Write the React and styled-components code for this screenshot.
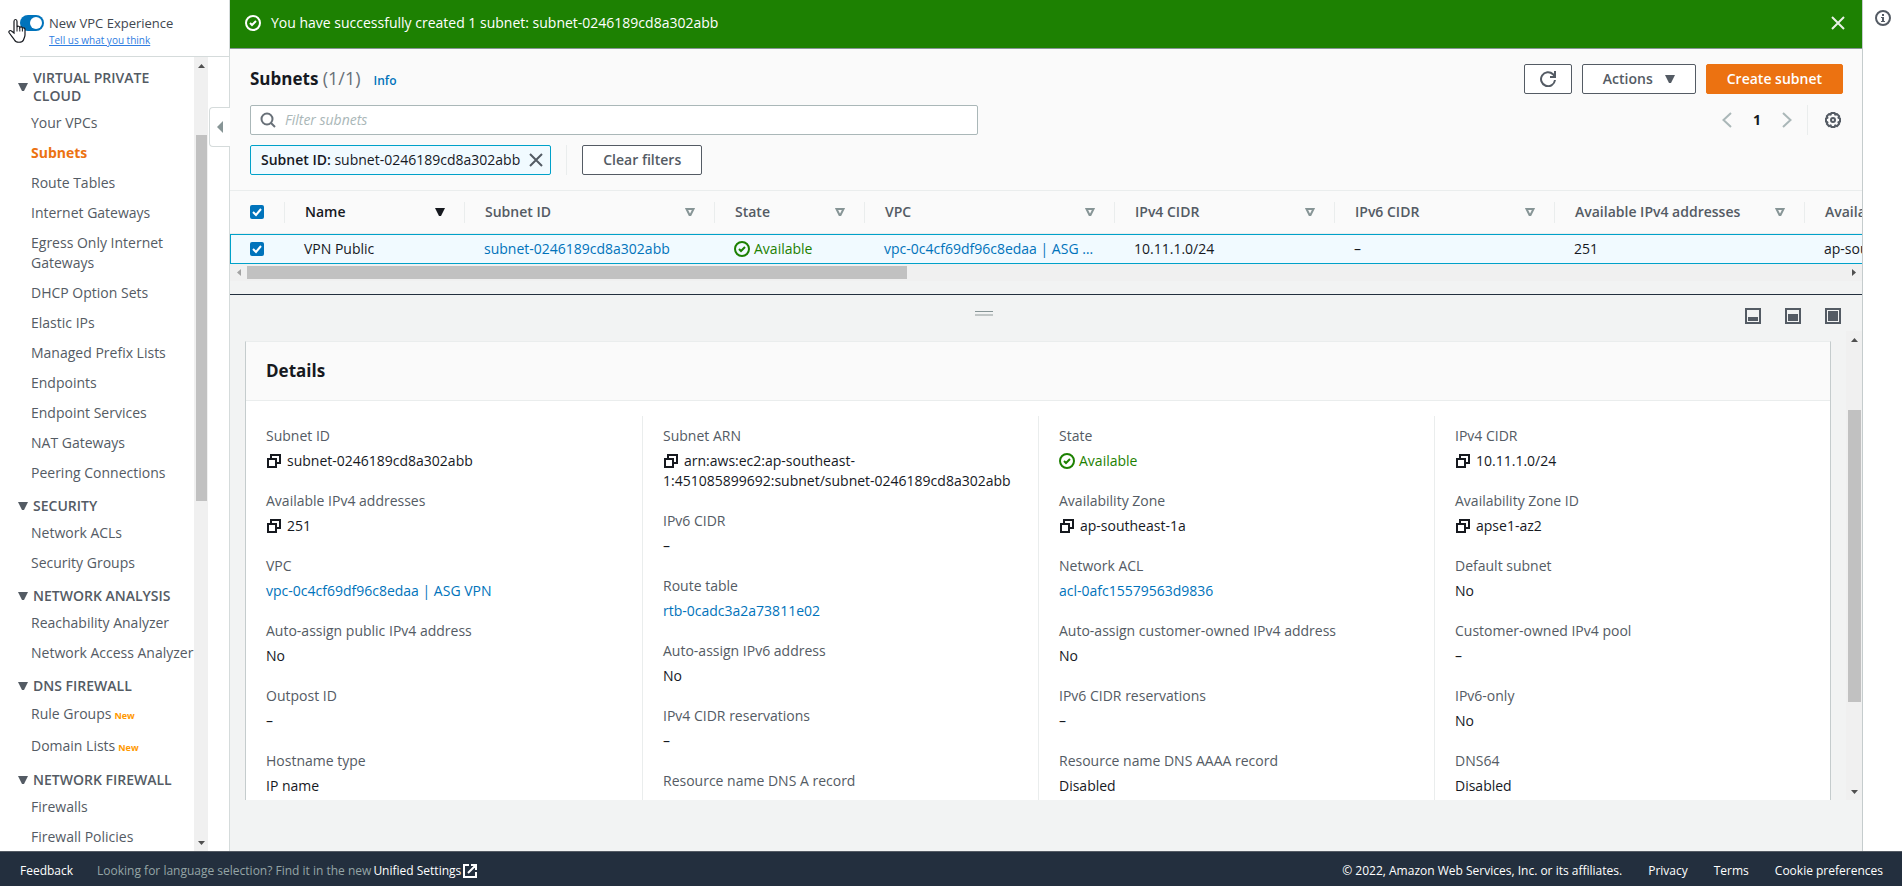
import React, { useState } from 'react';
import styled, { createGlobalStyle, css } from 'styled-components';

const GlobalStyle = createGlobalStyle`
    *, *::before, *::after { box-sizing: border-box; }
    body {
        margin: 0;
        background: #ffffff;
        color: #16191f;
        font-family: "Open Sans", "Noto Sans", sans-serif;
        font-size: 14px;
        line-height: 20px;
    }
    button, input { font: inherit; color: inherit; }
    a { color: #0073bb; text-decoration: none; }
    a:hover { text-decoration: underline; }
    ul, dl, dd, h1, h2, h3, p { margin: 0; padding: 0; }
    ul { list-style: none; }
    svg { display: block; flex: none; }
`

const Page = styled.div`
    display: flex;
    flex-direction: column;
    height: 100vh;
`

const Body = styled.div`
    display: flex;
    flex: 1;
    min-height: 0;
`

/* ---------- sidebar ---------- */

const Sidebar = styled.aside`
    position: relative;
    display: flex;
    flex-direction: column;
    width: 230px;
    flex: none;
    border-right: 1px solid #d5dbdb;
`

const Experience = styled.div`
    display: grid;
    grid-template-columns: 24px 1fr;
    column-gap: 5px;
    height: 57px;
    margin-left: 20px;
    padding-top: 13px;
    border-bottom: 1px solid #d5dbdb;
    align-content: start;
    align-items: center;
    color: #414750;
    font-size: 13px;
`

const Toggle = styled.input`
    appearance: none;
    width: 24px;
    height: 16px;
    margin: 0;
    padding: 2px;
    border-radius: 8px;
    background: #0073bb;
    &::before {
        content: '';
        display: block;
        width: 12px;
        height: 12px;
        margin-left: auto;
        border-radius: 50%;
        background: #ffffff;
    }
`

const FeedbackLink = styled.a`
    grid-column: 2;
    font-size: 10px;
    line-height: 14px;
    color: #2f7de1;
    text-decoration: underline;
`

const Pointer = styled.svg`
    position: absolute;
    left: 8px;
    top: 18px;
`

const SidebarScroll = styled.div`
    display: flex;
    flex: 1;
    min-height: 0;
    padding-right: 21px;
`

const Nav = styled.nav`
    flex: 1;
    overflow: hidden;
    padding: 3px 0 0 18px;
`

const GroupTitle = styled.h3`
    display: flex;
    align-items: center;
    gap: 5px;
    padding: 9px 40px 3px 0;
    font-size: 14px;
    line-height: 18px;
    font-weight: 600;
    color: #545b64;
    ${props => props.$wide && css`padding-right: 0; white-space: nowrap;`}
`

const NavItem = styled.li`
    padding: ${props => props.$tall ? '6px' : '5px'} 0 ${props => props.$tall ? '6px' : '5px'} 13px;
`

const NavLink = styled.a`
    color: ${props => props.$current ? '#ec7211' : '#545b64'};
    font-weight: ${props => props.$current ? 700 : 400};
`

const NewBadge = styled.span`
    margin-left: 3px;
    font-size: 9px;
    line-height: 1;
    font-weight: 700;
    color: #ff9900;
`

const CollapseButton = styled.button`
    position: absolute;
    right: -1px;
    top: 107px;
    display: flex;
    align-items: center;
    justify-content: center;
    width: 21px;
    height: 40px;
    padding: 0;
    border: 1px solid #d5dbdb;
    border-right: 0;
    border-radius: 4px 0 0 4px;
    background: #ffffff;
`

/* ---------- scroll bars ---------- */

const Track = styled.div`
    display: flex;
    flex: none;
    background: #f0f0f0;
    ${props => props.$horizontal
        ? css`height: 17px;`
        : css`flex-direction: column; width: ${props.$width};`}
`

const ArrowBox = styled.div`
    display: flex;
    align-items: center;
    justify-content: center;
    width: ${props => props.$horizontal ? '17px' : 'auto'};
    height: 17px;
    flex: none;
`

const Run = styled.div`
    flex: ${props => props.$size} 1 0;
`

const Thumb = styled(Run)`
    background: #c1c1c1;
    margin: ${props => props.$horizontal ? '2px 0' : '0 1px 0 2px'};
`

/* ---------- main column ---------- */

const Main = styled.main`
    display: flex;
    flex-direction: column;
    flex: 1;
    min-width: 0;
    border-right: 1px solid #c5cccd;
    background: #f2f3f3;
`

const Flash = styled.div`
    display: flex;
    align-items: center;
    gap: 10px;
    height: 49px;
    flex: none;
    padding: 0 16px 2px 15px;
    border-bottom: 1px solid #879596;
    background: #1d8102;
    color: #ffffff;
    font-weight: 500;
`

const FlashText = styled.p`
    flex: 1;
`

const IconButton = styled.button`
    display: flex;
    padding: 0;
    border: 0;
    background: none;
    color: ${props => props.$tone || '#545b64'};
`

const ListHeader = styled.div`
    display: flex;
    flex-direction: column;
    gap: 10px;
    flex: none;
    padding: 15px 19px 15px 20px;
    border-bottom: 1px solid #eaeded;
    background: #fafafa;
`

const HeaderRow = styled.div`
    display: flex;
    align-items: center;
    height: 30px;
    gap: ${props => props.$gap || '10px'};
`

const TitleRow = styled(HeaderRow)`
    margin-bottom: 1px;
`

const TitleGroup = styled.div`
    display: flex;
    align-items: baseline;
    gap: 13px;
    flex: 1;
`

const Title = styled.h1`
    font-size: 17px;
    line-height: 22px;
    font-weight: 700;
`

const Counter = styled.span`
    font-size: 18px;
    font-weight: 400;
    color: #687078;
`

const InfoLink = styled.a`
    font-size: 12px;
    font-weight: 600;
`

const Button = styled.button`
    display: flex;
    align-items: center;
    justify-content: center;
    gap: 12px;
    height: 30px;
    padding: 0 ${props => props.$pad || '20px'};
    border: 1px solid ${props => props.$primary ? '#ec7211' : '#545b64'};
    border-radius: 2px;
    background: ${props => props.$primary ? '#ec7211' : '#ffffff'};
    color: ${props => props.$primary ? '#ffffff' : '#545b64'};
    font-weight: 600;
`

const SearchBox = styled.label`
    display: flex;
    align-items: center;
    gap: 9px;
    flex: 0 1 728px;
    height: 30px;
    padding: 0 9px;
    border: 1px solid #aab7b8;
    border-radius: 2px;
    background: #ffffff;
    color: #687078;
`

const SearchInput = styled.input`
    flex: 1;
    border: 0;
    outline: 0;
    padding: 0;
    background: none;
    &::placeholder {
        color: #aab7b8;
        font-style: italic;
    }
`

const Pager = styled.div`
    display: flex;
    align-items: center;
    gap: 21px;
    margin-left: auto;
    font-weight: 700;
`

const Preferences = styled.div`
    display: flex;
    align-items: center;
    gap: 17px;
    padding: 0 2px 0 5px;
`

const Separator = styled.span`
    width: 1px;
    height: 30px;
    background: #eaeded;
`

const Token = styled.div`
    display: flex;
    align-items: center;
    gap: 8px;
    height: 30px;
    padding: 0 6px 0 10px;
    border: 1px solid #00a1c9;
    border-radius: 2px;
    background: #f1faff;
`

const TokenName = styled.span`
    font-weight: 600;
`

const TableWrap = styled.div`
    flex: none;
    overflow: hidden;
    background: #fafafa;
`

const Table = styled.table`
    table-layout: fixed;
    width: 1775px;
    border-collapse: separate;
    border-spacing: 0;
    text-align: left;
`

const HeadCell = styled.th`
    width: ${props => props.$width};
    height: 43px;
    padding: 0 0 0 20px;
    border-bottom: 1px solid #eaeded;
    font-weight: 600;
    color: ${props => props.$sorted ? '#16191f' : '#545b64'};
`

const HeadInner = styled.div`
    display: flex;
    align-items: center;
    justify-content: space-between;
    height: 21px;
    padding-right: 19px;
    border-right: 1px solid #eaeded;
    white-space: nowrap;
`

const Cell = styled.td`
    height: 30px;
    padding: 0 20px 0 19px;
    border: solid #00a1c9;
    border-width: 1px 0;
    background: #f1faff;
    white-space: nowrap;
    overflow: hidden;
    text-overflow: ellipsis;
    color: ${props => props.$link ? '#0073bb' : 'inherit'};
    &:first-child {
        border-left-width: 1px;
    }
`

const CheckWrap = styled.span`
    display: grid;
    width: 14px;
    height: 14px;
    & > * {
        grid-area: 1 / 1;
    }
`

const CheckInput = styled.input`
    appearance: none;
    width: 14px;
    height: 14px;
    margin: 0;
    border-radius: 2px;
    background: #0073bb;
`

const StatusLine = styled.span`
    display: flex;
    align-items: center;
    gap: 4px;
    color: #1d8102;
`

/* ---------- split panel ---------- */

const SplitPanel = styled.section`
    display: flex;
    flex-direction: column;
    flex: 1;
    min-height: 0;
    margin-top: 13px;
    padding-bottom: 51px;
    border-top: 1px solid #232f3e;
`

const PanelBar = styled.div`
    display: grid;
    grid-template-columns: 1fr auto;
    height: 36px;
    flex: none;
    padding-right: 21px;
`

const Handle = styled.div`
    justify-self: center;
    height: 5px;
    width: 18px;
    margin-top: 16px;
    border-top: 1px solid #879596;
    border-bottom: 2px solid #c1c6c6;
`

const PanelActions = styled.div`
    display: flex;
    gap: 24px;
    padding: 13px 0 0 8px;
`

const PanelScroll = styled.div`
    display: flex;
    flex: 1;
    min-height: 0;
`

const PanelContent = styled.div`
    flex: 1;
    min-width: 0;
    overflow: hidden;
    padding: 10px 15px 0;
`

const Card = styled.div`
    border: 1px solid #c5cccd;
    border-top-color: #eaeded;
    background: #ffffff;
`

const CardHeader = styled.header`
    display: flex;
    align-items: center;
    height: 59px;
    padding: 0 20px;
    border-bottom: 1px solid #eaeded;
    background: #fafafa;
`

const CardTitle = styled.h2`
    font-size: 17px;
    line-height: 22px;
    font-weight: 700;
`

const Columns = styled.div`
    display: grid;
    grid-template-columns: repeat(4, 1fr);
    padding: 15px 0;
`

const Column = styled.dl`
    display: flex;
    flex-direction: column;
    gap: 20px;
    padding: 10px 20px;
    & + & {
        border-left: 1px solid #eaeded;
    }
`

const Term = styled.dt`
    margin-bottom: 5px;
    color: #545b64;
`

const Value = styled.dd`
    min-height: 20px;
`

const CopyButton = styled.button`
    display: inline-block;
    vertical-align: middle;
    width: 14px;
    height: 14px;
    margin: 0 6px 2px 1px;
    padding: 0;
    border: 0;
    background: none;
`

/* ---------- right rail and footer ---------- */

const Rail = styled.aside`
    display: flex;
    justify-content: center;
    align-items: flex-start;
    width: 39px;
    flex: none;
    padding-top: 10px;
`

const Footer = styled.footer`
    display: flex;
    align-items: center;
    height: 35px;
    flex: none;
    padding: 3px 19px 0 20px;
    border-top: 1px solid #545b64;
    background: #232f3e;
    font-size: 12px;
    font-weight: 500;
    color: #ffffff;
`

const FooterLink = styled.a`
    display: flex;
    align-items: center;
    gap: 2px;
    color: #ffffff;
`

const FooterHint = styled.span`
    margin: 0 2px 0 24px;
    font-weight: 400;
    color: #95a5a6;
`

const FooterRight = styled.div`
    display: flex;
    gap: 26px;
    margin-left: auto;
`

/* ---------- icons ---------- */

const stroke = { fill: 'none', stroke: 'currentColor', strokeWidth: 2 }

const StatusIcon = () => (
    <svg width="16" height="16" viewBox="0 0 16 16" {...stroke}>
        <circle cx="8" cy="8" r="7" />
        <path d="M5 8l2 2 4-4" />
    </svg>
)

const CloseIcon = () => (
    <svg width="16" height="16" viewBox="0 0 16 16" {...stroke}>
        <path d="M2 2l12 12M14 2L2 14" />
    </svg>
)

const RefreshIcon = () => (
    <svg width="16" height="16" viewBox="0 0 16 16" {...stroke}>
        <path d="M15 9a7 7 0 1 1-2-5.800L14.500 5" />
        <path d="M15 0v6H10" />
    </svg>
)

const SearchIcon = () => (
    <svg width="16" height="16" viewBox="0 0 16 16" {...stroke}>
        <circle cx="7" cy="7" r="5.5" />
        <path d="M11 11l4 4" />
    </svg>
)

const AngleIcon = ({ right }) => (
    <svg width="10" height="16" viewBox="0 0 10 16" {...stroke}>
        <path d={right ? 'M1 1l7.5 7L1 15' : 'M9 1L1.5 8 9 15'} />
    </svg>
)

const GearIcon = () => (
    <svg width="16" height="16" viewBox="0 0 16 16" {...stroke}>
        <path d="M6.3 1h3.400l.5 1.600 1.700-.7 2.300 2.300-.8 1.600 1.600.6v3.300l-1.600.6.8 1.500-2.300 2.400-1.700-.8-.5 1.600H6.300l-.6-1.600-1.600.8-2.300-2.400.7-1.500L1 9.700V6.400l1.500-.6-.7-1.600 2.300-2.300 1.600.7z" strokeLinejoin="round" />
        <circle cx="8" cy="8" r="2" />
    </svg>
)

const InfoIcon = () => (
    <svg width="16" height="16" viewBox="0 0 16 16" {...stroke}>
        <circle cx="8" cy="8" r="7" />
        <path d="M7 4h2v2H7zM6 7h3v4h1v1H6v-1h1V8H6z" fill="currentColor" stroke="none" />
    </svg>
)

const CopyIcon = () => (
    <svg width="14" height="14" viewBox="0 0 14 14" {...stroke}>
        <path d="M1 5h8v8H1z" />
        <path d="M4 5V1h9v8H9" />
    </svg>
)

const PanelIcon = ({ top }) => (
    <svg width="16" height="16" viewBox="0 0 16 16" {...stroke}>
        <path d="M1 1h14v14H1z" />
        <path d={`M3 ${top}h10v${13 - top}H3z`} fill="currentColor" stroke="none" />
    </svg>
)

const ExternalIcon = () => (
    <svg width="14" height="14" viewBox="0 0 14 14" {...stroke}>
        <path d="M6 1H1v12h12V8M8 1h5v5M13 1L5 9" />
    </svg>
)

const SortIcon = ({ filled }) => (
    <svg width="10" height="8" viewBox="0 0 10 8">
        {filled
            ? <path d="M0 0h10L6 8H4z" fill="currentColor" />
            : <path d="M1.500 1h7L5.500 7h-1z" fill="none" stroke="#879596" strokeWidth="2" />}
    </svg>
)

const arrows = {
    up: 'M0 4L3.500 0 7 4z',
    down: 'M0 0h7L3.500 4z',
    left: 'M4 0v7L0 3.500z',
    right: 'M0 0l4 3.500L0 7z'
}

const ScrollArrow = ({ to, color = '#505050' }) => {
    const flat = to === 'up' || to === 'down'
    return (
        <svg width={flat ? 7 : 4} height={flat ? 4 : 7}>
            <path d={arrows[to]} fill={color} />
        </svg>
    )
}

const HandCursor = () => (
    <Pointer width="19" height="26" viewBox="0 0 19 26" aria-hidden="true">
        <path
            d="M6 15V3.500C6 .8 9 .8 9 3.500V9c.5-1.200 2.600-1 2.800.5.6-1 2.400-.8 2.600.7.8-.8 2.600-.4 2.600 1.300V17c0 2-1.200 3.500-1.500 5-1.500 3-7.500 3-9 0C5.500 20 2.500 17 1 14.500c-.6-1.800 1.500-2.500 2.500-1.500z"
            fill="#ffffff"
            stroke="#16191f"
            strokeWidth="1.200"
        />
        <path d="M9 9v4.500M11.800 9.500v4M14.400 10.500v3" stroke="#16191f" />
    </Pointer>
)

/* ---------- data ---------- */

const navGroups = [
    {
        title: 'VIRTUAL PRIVATE CLOUD',
        items: [
            'Your VPCs', 'Subnets', 'Route Tables', 'Internet Gateways', 'Egress Only Internet Gateways',
            'DHCP Option Sets', 'Elastic IPs', 'Managed Prefix Lists', 'Endpoints', 'Endpoint Services',
            'NAT Gateways', 'Peering Connections'
        ]
    },
    { title: 'SECURITY', items: ['Network ACLs', 'Security Groups'] },
    { title: 'NETWORK ANALYSIS', wide: true, items: ['Reachability Analyzer', 'Network Access Analyzer'] },
    { title: 'DNS FIREWALL', isNew: true, items: ['Rule Groups', 'Domain Lists'] },
    { title: 'NETWORK FIREWALL', wide: true, items: ['Firewalls', 'Firewall Policies'] }
]

const tableColumns = [
    { label: 'Name', width: '180px', sorted: true },
    { label: 'Subnet ID', width: '250px' },
    { label: 'State', width: '150px' },
    { label: 'VPC', width: '250px' },
    { label: 'IPv4 CIDR', width: '220px' },
    { label: 'IPv6 CIDR', width: '220px' },
    { label: 'Available IPv4 addresses', width: '250px' },
    { label: 'Availability Zone', width: '200px' }
]

const details = [
    [
        { label: 'Subnet ID', value: 'subnet-0246189cd8a302abb', kind: 'copy' },
        { label: 'Available IPv4 addresses', value: '251', kind: 'copy' },
        { label: 'VPC', value: 'vpc-0c4cf69df96c8edaa | ASG VPN', kind: 'link' },
        { label: 'Auto-assign public IPv4 address', value: 'No' },
        { label: 'Outpost ID', value: '–' },
        { label: 'Hostname type', value: 'IP name' }
    ],
    [
        { label: 'Subnet ARN', value: 'arn:aws:ec2:ap-southeast-1:451085899692:subnet/subnet-0246189cd8a302abb', kind: 'copy' },
        { label: 'IPv6 CIDR', value: '–' },
        { label: 'Route table', value: 'rtb-0cadc3a2a73811e02', kind: 'link' },
        { label: 'Auto-assign IPv6 address', value: 'No' },
        { label: 'IPv4 CIDR reservations', value: '–' },
        { label: 'Resource name DNS A record', value: 'Disabled' }
    ],
    [
        { label: 'State', value: 'Available', kind: 'status' },
        { label: 'Availability Zone', value: 'ap-southeast-1a', kind: 'copy' },
        { label: 'Network ACL', value: 'acl-0afc15579563d9836', kind: 'link' },
        { label: 'Auto-assign customer-owned IPv4 address', value: 'No' },
        { label: 'IPv6 CIDR reservations', value: '–' },
        { label: 'Resource name DNS AAAA record', value: 'Disabled' }
    ],
    [
        { label: 'IPv4 CIDR', value: '10.11.1.0/24', kind: 'copy' },
        { label: 'Availability Zone ID', value: 'apse1-az2', kind: 'copy' },
        { label: 'Default subnet', value: 'No' },
        { label: 'Customer-owned IPv4 pool', value: '–' },
        { label: 'IPv6-only', value: 'No' },
        { label: 'DNS64', value: 'Disabled' }
    ]
]

/* ---------- parts ---------- */

function Checkbox({ label, checked, onChange }) {
    return (
        <CheckWrap>
            <CheckInput type="checkbox" aria-label={label} checked={checked} onChange={onChange} />
            {checked && (
                <svg width="14" height="14" pointerEvents="none">
                    <path d="M3 7l3 3 5-6" fill="none" stroke="#ffffff" strokeWidth="2" />
                </svg>
            )}
        </CheckWrap>
    )
}

function ScrollBar({ before, thumb, after, horizontal, width }) {
    return (
        <Track $horizontal={horizontal} $width={width} aria-hidden="true">
            <ArrowBox $horizontal={horizontal}>
                <ScrollArrow to={horizontal ? 'left' : 'up'} color={horizontal ? '#a3a3a3' : undefined} />
            </ArrowBox>
            <Run $size={before} />
            <Thumb $size={thumb} $horizontal={horizontal} />
            <Run $size={after} />
            <ArrowBox $horizontal={horizontal}>
                <ScrollArrow to={horizontal ? 'right' : 'down'} />
            </ArrowBox>
        </Track>
    )
}

function Status({ children }) {
    return <StatusLine><StatusIcon />{children}</StatusLine>
}

function DetailValue({ item }) {
    if (item.kind === 'link') {
        return <a href="#">{item.value}</a>
    }
    if (item.kind === 'status') {
        return <Status>{item.value}</Status>
    }
    if (item.kind === 'copy') {
        return <><CopyButton aria-label={`Copy ${item.label}`}><CopyIcon /></CopyButton>{item.value}</>
    }
    return item.value
}

function SideNavigation() {
    const [newExperience, setNewExperience] = useState(true)
    return (
        <Sidebar>
            <Experience>
                <Toggle
                    id="experience"
                    type="checkbox"
                    role="switch"
                    checked={newExperience}
                    onChange={() => setNewExperience(!newExperience)}
                />
                <label htmlFor="experience">New VPC Experience</label>
                <FeedbackLink href="#">Tell us what you think</FeedbackLink>
            </Experience>
            <HandCursor />
            <SidebarScroll>
                <Nav>
                    {navGroups.map(group => (
                        <React.Fragment key={group.title}>
                            <GroupTitle $wide={group.wide}>
                                <SortIcon filled />
                                {group.title}
                            </GroupTitle>
                            <ul>
                                {group.items.map(item => (
                                    <NavItem key={item} $tall={group.isNew}>
                                        <NavLink href="#" $current={item === 'Subnets'}>{item}</NavLink>
                                        {group.isNew && <NewBadge>New</NewBadge>}
                                    </NavItem>
                                ))}
                            </ul>
                        </React.Fragment>
                    ))}
                </Nav>
                <ScrollBar before={61} thumb={366} after={333} width="14px" />
            </SidebarScroll>
            <CollapseButton aria-label="Close navigation">
                <svg width="6" height="12"><path d="M6 0v12L0 6z" fill="#879596" /></svg>
            </CollapseButton>
        </Sidebar>
    )
}

function SubnetTable() {
    const [selected, setSelected] = useState(true)
    const toggle = () => setSelected(!selected)
    return (
        <TableWrap>
            <Table>
                <thead>
                    <tr>
                        <HeadCell $width="55px">
                            <HeadInner><Checkbox label="Select all" checked={selected} onChange={toggle} /></HeadInner>
                        </HeadCell>
                        {tableColumns.map(col => (
                            <HeadCell key={col.label} $width={col.width} $sorted={col.sorted}>
                                <HeadInner>{col.label}<SortIcon filled={col.sorted} /></HeadInner>
                            </HeadCell>
                        ))}
                    </tr>
                </thead>
                <tbody>
                    <tr>
                        <Cell><Checkbox label="Select VPN Public" checked={selected} onChange={toggle} /></Cell>
                        <Cell>VPN Public</Cell>
                        <Cell><a href="#">subnet-0246189cd8a302abb</a></Cell>
                        <Cell><Status>Available</Status></Cell>
                        <Cell $link><a href="#">vpc-0c4cf69df96c8edaa | ASG VPN</a></Cell>
                        <Cell>10.11.1.0/24</Cell>
                        <Cell>–</Cell>
                        <Cell>251</Cell>
                        <Cell>ap-southeast-1a</Cell>
                    </tr>
                </tbody>
            </Table>
            <ScrollBar horizontal before={0} thumb={660} after={938} />
        </TableWrap>
    )
}

function DetailsPanel() {
    return (
        <SplitPanel>
            <PanelBar>
                <Handle />
                <PanelActions>
                    <IconButton aria-label="Small panel"><PanelIcon top={9} /></IconButton>
                    <IconButton aria-label="Medium panel"><PanelIcon top={6} /></IconButton>
                    <IconButton aria-label="Full panel"><PanelIcon top={3} /></IconButton>
                </PanelActions>
            </PanelBar>
            <PanelScroll>
                <PanelContent>
                    <Card>
                        <CardHeader><CardTitle>Details</CardTitle></CardHeader>
                        <Columns>
                            {details.map((column, i) => (
                                <Column key={i}>
                                    {column.map(item => (
                                        <div key={item.label}>
                                            <Term>{item.label}</Term>
                                            <Value><DetailValue item={item} /></Value>
                                        </div>
                                    ))}
                                </Column>
                            ))}
                        </Columns>
                    </Card>
                </PanelContent>
                <ScrollBar before={62} thumb={292} after={81} width="16px" />
            </PanelScroll>
        </SplitPanel>
    )
}

function App() {
    const [query, setQuery] = useState('')
    return (
        <>
            <GlobalStyle />
            <Page>
                <Body>
                    <SideNavigation />
                    <Main>
                        <Flash role="status">
                            <StatusIcon />
                            <FlashText>You have successfully created 1 subnet: subnet-0246189cd8a302abb</FlashText>
                            <IconButton aria-label="Dismiss" $tone="#e9f2e6"><CloseIcon /></IconButton>
                        </Flash>
                        <ListHeader>
                            <TitleRow>
                                <TitleGroup>
                                    <Title>Subnets <Counter>(1/1)</Counter></Title>
                                    <InfoLink href="#">Info</InfoLink>
                                </TitleGroup>
                                <Button aria-label="Refresh" $pad="15px"><RefreshIcon /></Button>
                                <Button>Actions<SortIcon filled /></Button>
                                <Button $primary>Create subnet</Button>
                            </TitleRow>
                            <HeaderRow>
                                <SearchBox>
                                    <SearchIcon />
                                    <SearchInput
                                        type="text"
                                        aria-label="Filter subnets"
                                        placeholder="Filter subnets"
                                        value={query}
                                        onChange={e => setQuery(e.target.value)}
                                    />
                                </SearchBox>
                                <Pager>
                                    <IconButton aria-label="Previous page" $tone="#aab7b8"><AngleIcon /></IconButton>
                                    <span>1</span>
                                    <IconButton aria-label="Next page" $tone="#aab7b8"><AngleIcon right /></IconButton>
                                </Pager>
                                <Preferences>
                                    <Separator />
                                    <IconButton aria-label="Preferences"><GearIcon /></IconButton>
                                </Preferences>
                            </HeaderRow>
                            <HeaderRow $gap="15px">
                                <Token>
                                    <span><TokenName>Subnet ID:</TokenName> subnet-0246189cd8a302abb</span>
                                    <IconButton aria-label="Remove filter"><CloseIcon /></IconButton>
                                </Token>
                                <Separator />
                                <Button>Clear filters</Button>
                            </HeaderRow>
                        </ListHeader>
                        <SubnetTable />
                        <DetailsPanel />
                    </Main>
                    <Rail>
                        <IconButton aria-label="Open info panel"><InfoIcon /></IconButton>
                    </Rail>
                </Body>
                <Footer>
                    <FooterLink href="#">Feedback</FooterLink>
                    <FooterHint>Looking for language selection? Find it in the new</FooterHint>
                    <FooterLink href="#">Unified Settings<ExternalIcon /></FooterLink>
                    <FooterRight>
                        <span>© 2022, Amazon Web Services, Inc. or its affiliates.</span>
                        <FooterLink href="#">Privacy</FooterLink>
                        <FooterLink href="#">Terms</FooterLink>
                        <FooterLink href="#">Cookie preferences</FooterLink>
                    </FooterRight>
                </Footer>
            </Page>
        </>
    )
}

export default App
